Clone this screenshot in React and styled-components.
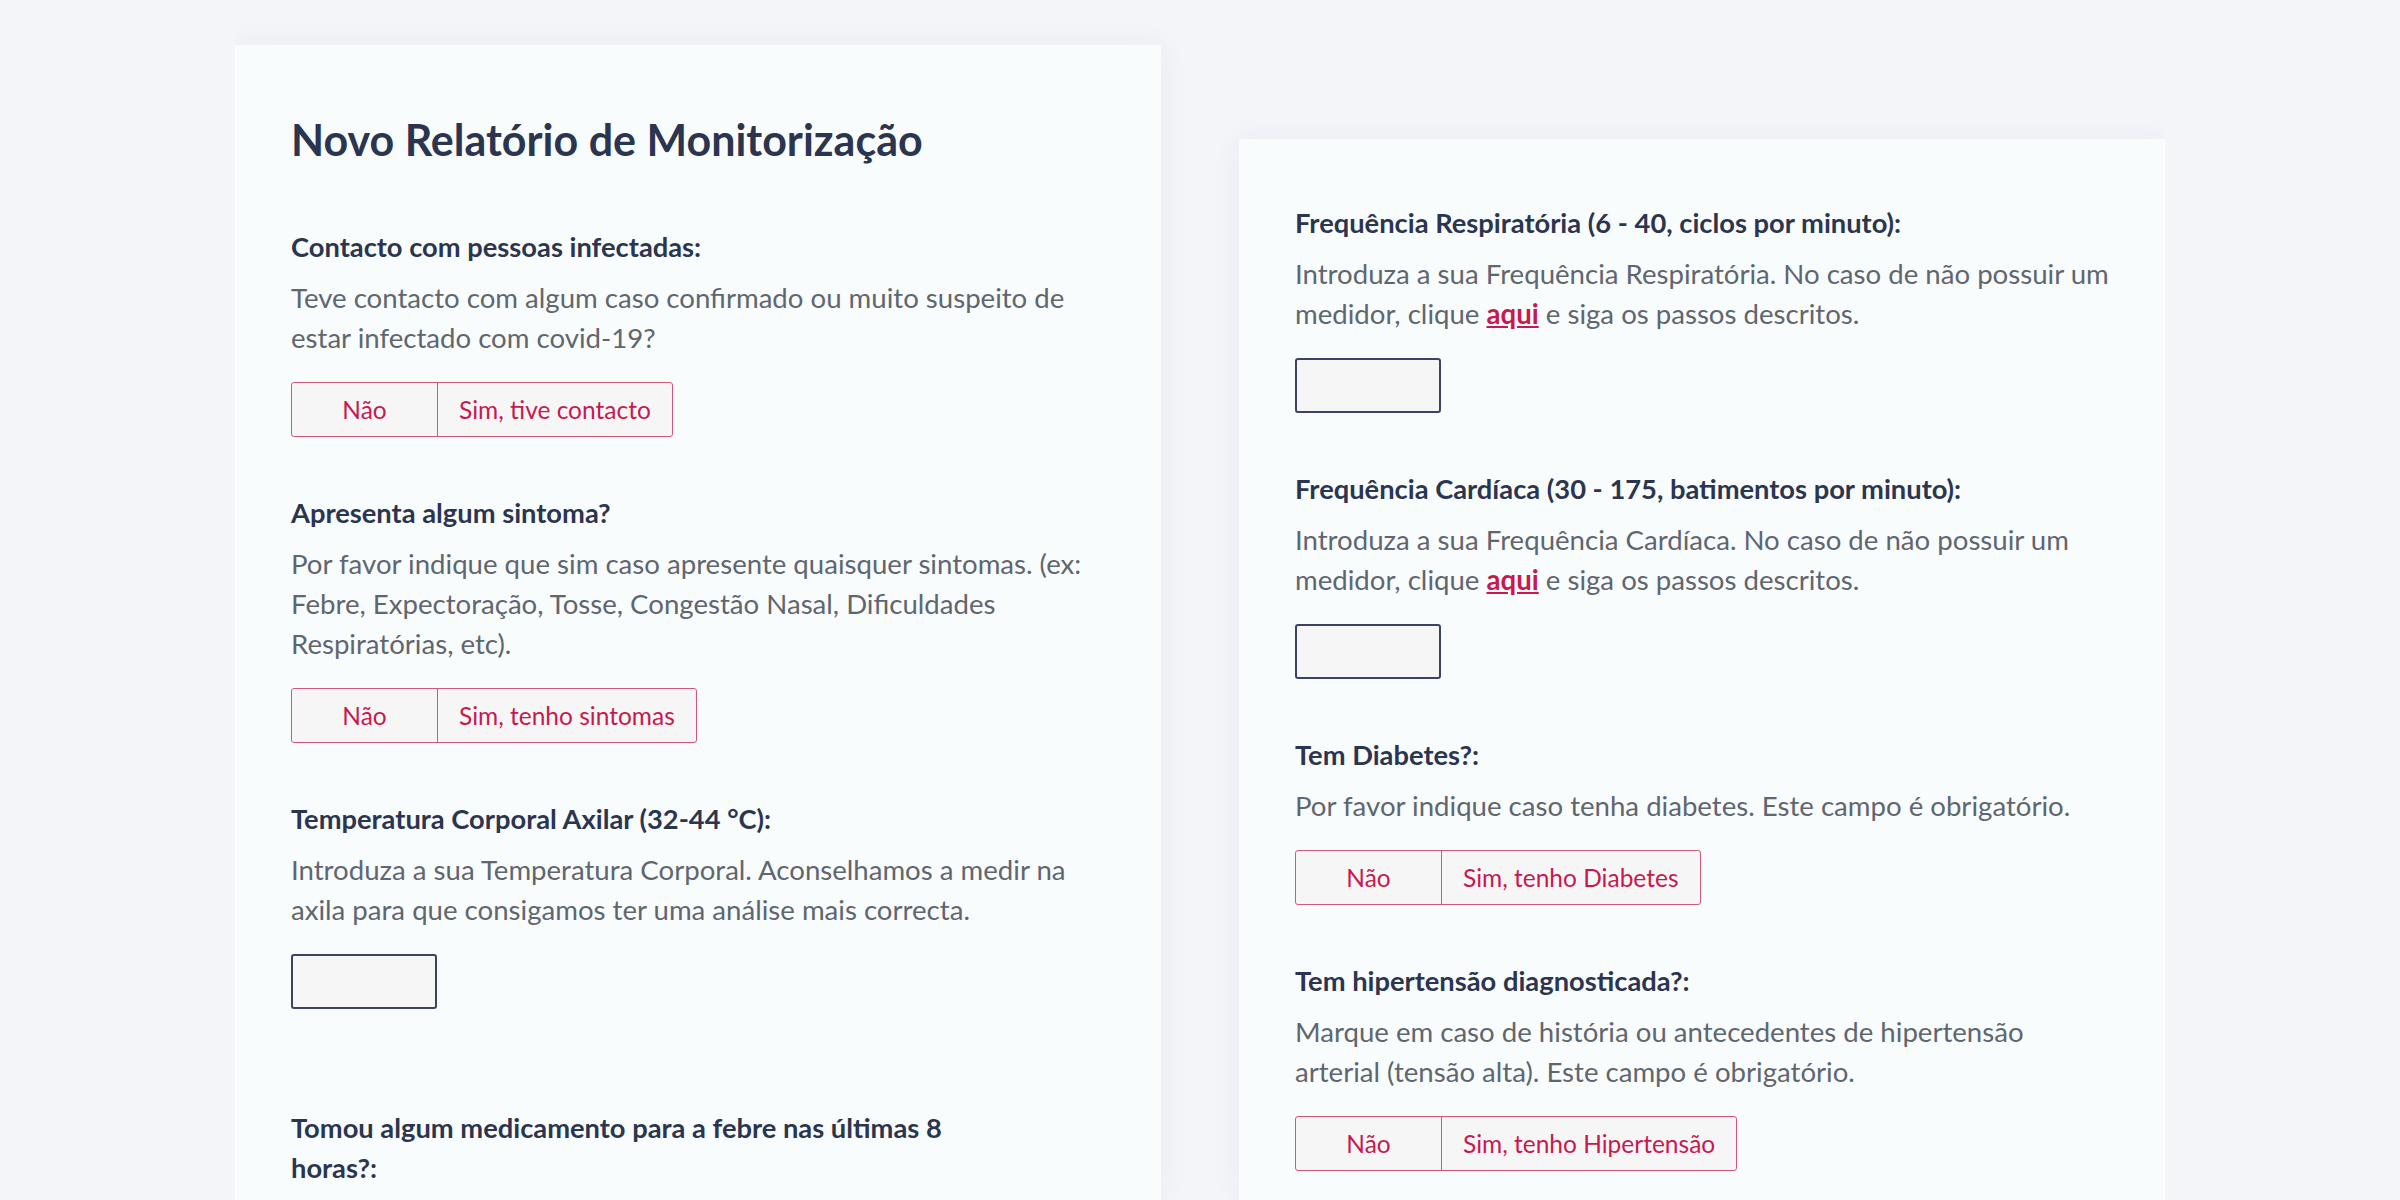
import React from 'react';
import styled, { createGlobalStyle } from 'styled-components';

const GlobalStyle = createGlobalStyle`
  html, body {
    margin: 0;
    padding: 0;
    background: #f4f5f9;
  }
  body {
    font-family: Lato, "Noto Sans", "Liberation Sans", sans-serif;
    overflow: hidden;
  }
`;

const Page = styled.div`
  display: flex;
  justify-content: space-between;
  align-items: stretch;
  width: 1930px;
  height: 1200px;
  box-sizing: border-box;
  margin: 0 auto;
  padding-top: 45px;
  overflow: hidden;
`;

const Card = styled.section`
  width: 926px;
  box-sizing: border-box;
  background: #f9fcfc;
  box-shadow: 0 0 28px rgba(40, 50, 90, 0.05);
  padding: ${(p) => (p.$offset ? '64px' : '70px')} 56px 0;
  margin-top: ${(p) => p.$offset || 0}px;
`;

const Title = styled.h1`
  margin: 0 0 62px;
  font-size: 43px;
  line-height: 50px;
  font-weight: 700;
  color: #2c3550;
`;

const Field = styled.div`
  margin-bottom: ${(p) => (p.$extra ? 99 : 56)}px;
`;

const Label = styled.div`
  font-size: 27.3px;
  line-height: 40px;
  font-weight: 700;
  color: #2c3550;
  max-width: ${(p) => (p.$narrow ? '700px' : 'none')};
`;

const Help = styled.p`
  margin: 11px 0 24px;
  font-size: 27.6px;
  line-height: 40px;
  color: #5f6670;
`;

const HelpLink = styled.a`
  color: #c8194f;
  font-weight: 700;
  text-decoration: underline;
  cursor: pointer;
`;

const Toggle = styled.div`
  display: inline-flex;
  height: 55px;
  box-sizing: border-box;
  border: 1.5px solid #d2577a;
  border-radius: 3px;
  background: #f6f6f6;
  overflow: hidden;
`;

const Option = styled.button`
  min-width: 145px;
  padding: 0 21px;
  border: none;
  border-left: ${(p) => (p.$first ? 'none' : '1.5px solid #d2577a')};
  background: transparent;
  font-family: inherit;
  font-size: 24.5px;
  color: #c8194f;
  cursor: pointer;
`;

const NumberInput = styled.input`
  display: block;
  width: 146px;
  height: 55px;
  box-sizing: border-box;
  border: 2px solid #3b4266;
  border-radius: 3px;
  background: #f6f6f6;
  font-family: inherit;
  font-size: 26px;
  padding: 0 12px;
`;

const YesNo = ({ yes }) => (
  <Toggle>
    <Option $first>Não</Option>
    <Option>{yes}</Option>
  </Toggle>
);

export default function App() {
  return (
    <>
      <GlobalStyle />
      <Page>
        <Card>
          <Title>Novo Relatório de Monitorização</Title>

          <Field>
            <Label>Contacto com pessoas infectadas:</Label>
            <Help>Teve contacto com algum caso confirmado ou muito suspeito de estar infectado com covid-19?</Help>
            <YesNo yes="Sim, tive contacto" />
          </Field>

          <Field>
            <Label>Apresenta algum sintoma?</Label>
            <Help>
              Por favor indique que sim caso apresente quaisquer sintomas. (ex: Febre, Expectoração, Tosse, Congestão Nasal, Dificuldades Respiratórias, etc).
            </Help>
            <YesNo yes="Sim, tenho sintomas" />
          </Field>

          <Field $extra>
            <Label>Temperatura Corporal Axilar (32-44 °C):</Label>
            <Help>Introduza a sua Temperatura Corporal. Aconselhamos a medir na axila para que consigamos ter uma análise mais correcta.</Help>
            <NumberInput type="text" />
          </Field>

          <Field>
            <Label $narrow>Tomou algum medicamento para a febre nas últimas 8 horas?:</Label>
          </Field>
        </Card>

        <Card $offset={94}>
          <Field>
            <Label>Frequência Respiratória (6 - 40, ciclos por minuto):</Label>
            <Help>
              Introduza a sua Frequência Respiratória. No caso de não possuir um medidor, clique <HelpLink>aqui</HelpLink> e siga os passos descritos.
            </Help>
            <NumberInput type="text" />
          </Field>

          <Field>
            <Label>Frequência Cardíaca (30 - 175, batimentos por minuto):</Label>
            <Help>
              Introduza a sua Frequência Cardíaca. No caso de não possuir um medidor, clique <HelpLink>aqui</HelpLink> e siga os passos descritos.
            </Help>
            <NumberInput type="text" />
          </Field>

          <Field>
            <Label>Tem Diabetes?:</Label>
            <Help>Por favor indique caso tenha diabetes. Este campo é obrigatório.</Help>
            <YesNo yes="Sim, tenho Diabetes" />
          </Field>

          <Field>
            <Label>Tem hipertensão diagnosticada?:</Label>
            <Help>Marque em caso de história ou antecedentes de hipertensão arterial (tensão alta). Este campo é obrigatório.</Help>
            <YesNo yes="Sim, tenho Hipertensão" />
          </Field>
        </Card>
      </Page>
    </>
  );
}
